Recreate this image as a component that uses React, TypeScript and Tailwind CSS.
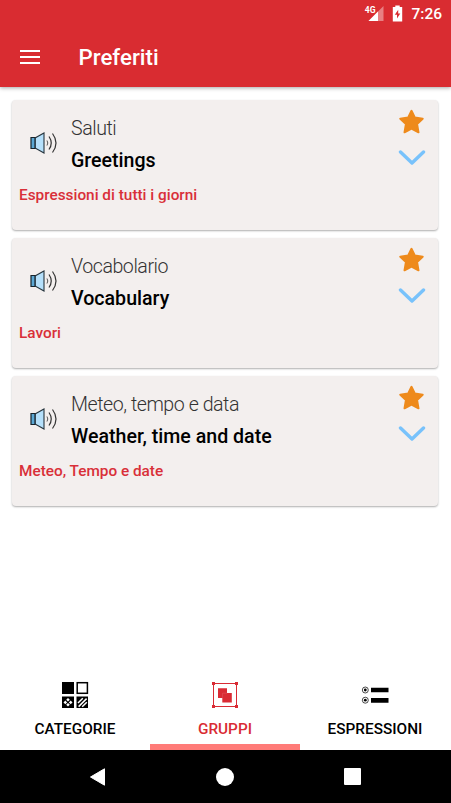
import React from "react";

interface FavoriteCardProps {
    title: string;
    translation: string;
    group: string;
}

interface TabProps {
    label: string;
    active?: boolean;
    children: React.ReactNode;
}

const favorites: FavoriteCardProps[] = [
    { title: "Saluti", translation: "Greetings", group: "Espressioni di tutti i giorni" },
    { title: "Vocabolario", translation: "Vocabulary", group: "Lavori" },
    { title: "Meteo, tempo e data", translation: "Weather, time and date", group: "Meteo, Tempo e date" },
];

const SpeakerIcon = () => (
    <svg width="28" height="22" viewBox="0 0 28 22" fill="none">
        <path d="M5 6L14 1V21L5 16Z" fill="#b5e0fb" stroke="#26343d" strokeWidth="1.1" />
        <path d="M1 5.5H5V16.5H1Z" fill="#5ba7d3" stroke="#17222a" strokeWidth="1.2" />
        <path d="M17 8.5Q18.6 11 17 13.5" stroke="#555" strokeWidth="1" />
        <path d="M19 4.5Q23.5 11 19 17.5" stroke="#333" strokeWidth="1.2" />
        <path d="M22.5 1.5Q29.5 11 22.5 20.5" stroke="#333" strokeWidth="1.2" />
    </svg>
);

const StarIcon = () => (
    <svg width="26" height="26" viewBox="0 0 26 26">
        <path
            d="M12.5 1.8L15.9 8.6L23.7 9.7L18.1 15.1L19.5 23.3L12.5 19.7L5.5 23.3L6.9 15.1L1.3 9.7L9.1 8.6Z"
            fill="#ee8a1b"
            stroke="#ee8a1b"
            strokeWidth="2"
            strokeLinejoin="round"
        />
    </svg>
);

const ChevronIcon = () => (
    <svg width="28" height="16" viewBox="0 0 28 16" fill="none">
        <path d="M2.5 2L14 13L25.5 2" stroke="#78c2fb" strokeWidth="3.4" strokeLinecap="round" strokeLinejoin="round" />
    </svg>
);

const FavoriteCard: React.FC<FavoriteCardProps> = ({ title, translation, group }) => {
    return (
        <div className="flex h-[130px] flex-col rounded-[4px] bg-[#f3efee] shadow-[0_1px_2px_rgba(0,0,0,0.32)]">
            <div className="flex h-[82px] pr-[12px]">
                <div className="w-[59px] pl-[18px] pt-[32px]">
                    <SpeakerIcon />
                </div>
                <div className="flex-1 pt-[13px] text-[19.6px] leading-8">
                    <p className="font-light tracking-[-0.45px] text-[#333]">{title}</p>
                    <p className="font-medium text-black">{translation}</p>
                </div>
                <div className="flex flex-col items-center gap-[15px] pt-[9px]">
                    <StarIcon />
                    <ChevronIcon />
                </div>
            </div>
            <p className="pl-[7px] pt-[3px] text-[15.35px] font-medium leading-5 text-[#d92f39]">{group}</p>
        </div>
    );
};

const Tab: React.FC<TabProps> = ({ label, active, children }) => {
    return (
        <button
            className={`flex w-[150px] flex-col items-center border-b-[6px] pt-[11px] ${
                active ? "border-[#ff7b78] text-[#d92b34]" : "border-transparent text-black"
            }`}
        >
            {children}
            <span className="mt-[10px] text-[15.35px] font-medium leading-5">{label}</span>
        </button>
    );
};

const CategoriesIcon = () => (
    <svg width="28" height="28" viewBox="0 0 28 28">
        <path d="M1 1H13V13H1ZM1 15.5H13V27H1ZM15.5 15.5H27V27H15.5Z" fill="#000" />
        <rect x="16.2" y="1.7" width="10.2" height="10.6" fill="none" stroke="#000" strokeWidth="1.5" />
        <path
            d="M7 17L8.8 18.8L7 20.6L5.2 18.8ZM7 22L8.8 23.8L7 25.6L5.2 23.8ZM4.3 19.6L6.1 21.4L4.3 23.2L2.5 21.4ZM9.7 19.6L11.5 21.4L9.7 23.2L7.9 21.4Z"
            fill="#fff"
        />
        <path d="M17 22L21.8 17.2M17.6 25.6L25.6 17.6M21.2 25.8L25.8 21.2" stroke="#fff" strokeWidth="1.5" />
    </svg>
);

const GroupsIcon = () => (
    <svg width="28" height="28" viewBox="0 0 28 28" fill="#d92b34">
        <rect x="2.5" y="2.5" width="23" height="23" fill="none" stroke="#d92b34" strokeWidth="1" />
        <path d="M1 1H4V4H1ZM24 1H27V4H24ZM1 24H4V27H1ZM24 24H27V27H24Z" />
        <path d="M7 7.3H16V12H20.8V21.5H11.3V17H7Z" />
        <path d="M11.5 16.8V12.2H16.2" fill="none" stroke="#ec7c82" strokeWidth="0.3" />
    </svg>
);

const ExpressionsIcon = () => (
    <svg width="28" height="28" viewBox="0 0 28 28">
        <path d="M10 6.7H27.5V11.3H10ZM10 17.1H27.5V21.7H10Z" />
        <circle cx="4.3" cy="9" r="3" fill="none" stroke="#000" strokeWidth="0.7" />
        <circle cx="4.3" cy="19.2" r="3" fill="none" stroke="#000" strokeWidth="0.7" />
        <circle cx="4.3" cy="9" r="1.4" />
        <circle cx="4.3" cy="19.2" r="1.4" />
    </svg>
);

export default function App() {
    return (
        <div className="flex h-[803px] w-[451px] flex-col bg-white font-['Roboto',sans-serif]">
            <header className="h-[87px] bg-[#d92c31] text-white shadow-[0_1px_4px_rgba(0,0,0,0.35)]">
                {/* Status bar */}
                <div className="flex h-[27px] items-center justify-end pr-[9px]">
                    <svg width="20" height="17" viewBox="0 0 20 17" className="mr-[8px]">
                        <path d="M19.5 1V16H4.5Z" fill="#fff" fillOpacity="0.4" />
                        <path d="M14 6.5V16H4.5Z" fill="#fff" />
                        <text x="0.8" y="7.7" fontSize="8.5" fontWeight="700" fill="#fff" stroke="#d92c31" strokeWidth="0.6" paintOrder="stroke">
                            4G
                        </text>
                    </svg>
                    <svg width="11" height="17" viewBox="0 0 11 17" className="mr-[8px]">
                        <path d="M3.3 0.5H7.7V2H10.2V16.5H0.8V2H3.3Z" fill="#fff" />
                        <path d="M6.2 4.8L2.8 9.8H5V13.5L8.3 8.4H6.2Z" fill="#d92c31" />
                    </svg>
                    <span className="text-[15.5px] font-medium leading-5">7:26</span>
                </div>
                <div className="flex h-[60px] items-center pl-5">
                    <svg width="20" height="14" viewBox="0 0 20 14" className="mr-[38.5px]">
                        <path d="M0 1H20M0 7H20M0 13H20" stroke="#fff" strokeWidth="2" />
                    </svg>
                    <h1 className="text-[22.3px] font-medium leading-7">Preferiti</h1>
                </div>
            </header>

            <main className="flex flex-1 flex-col gap-2 pl-[12px] pr-[13px] pt-[13px]">
                {favorites.map((item) => (
                    <FavoriteCard key={item.title} {...item} />
                ))}
            </main>

            <nav className="flex h-[80px]">
                <Tab label="CATEGORIE">
                    <CategoriesIcon />
                </Tab>
                <Tab label="GRUPPI" active>
                    <GroupsIcon />
                </Tab>
                <Tab label="ESPRESSIONI">
                    <ExpressionsIcon />
                </Tab>
            </nav>

            {/* System navigation */}
            <div className="flex h-[53px] items-center justify-between bg-black pl-[88px] pr-[90px]">
                <svg width="20" height="20" viewBox="0 0 20 20" fill="#fff">
                    <path d="M16.5 1.8V18.2L2.5 10Z" stroke="#fff" strokeWidth="1" strokeLinejoin="round" />
                </svg>
                <div className="mr-[2px] size-[18px] rounded-full bg-white" />
                <div className="size-[17px] rounded-[1px] bg-white" />
            </div>
        </div>
    );
}
